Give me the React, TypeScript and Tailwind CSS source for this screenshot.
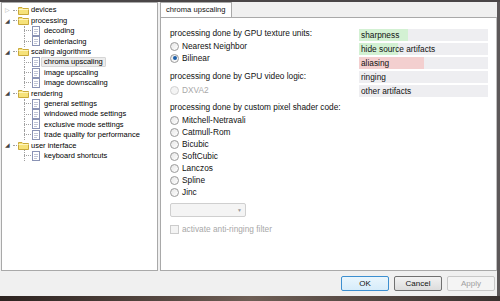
import React from 'react';

type TreeNode = { label: string; kind: 'folder' | 'page'; expander?: 'open' | 'closed'; selected?: boolean };

const TREE: TreeNode[] = [
  { label: 'devices', kind: 'folder', expander: 'closed' },
  { label: 'processing', kind: 'folder', expander: 'open' },
  { label: 'decoding', kind: 'page' },
  { label: 'deinterlacing', kind: 'page' },
  { label: 'scaling algorithms', kind: 'folder', expander: 'open' },
  { label: 'chroma upscaling', kind: 'page', selected: true },
  { label: 'image upscaling', kind: 'page' },
  { label: 'image downscaling', kind: 'page' },
  { label: 'rendering', kind: 'folder', expander: 'open' },
  { label: 'general settings', kind: 'page' },
  { label: 'windowed mode settings', kind: 'page' },
  { label: 'exclusive mode settings', kind: 'page' },
  { label: 'trade quality for performance', kind: 'page' },
  { label: 'user interface', kind: 'folder', expander: 'open' },
  { label: 'keyboard shortcuts', kind: 'page' },
];

const BARS = [
  { label: 'sharpness', fill: 'w-[49px] bg-[#d3f1d3]' },
  { label: 'hide source artifacts', fill: 'w-[39px] bg-[#d3f1d3]' },
  { label: 'aliasing', fill: 'w-[65px] bg-[#f3cfcf]' },
  { label: 'ringing', fill: 'w-0' },
  { label: 'other artifacts', fill: 'w-0' },
];

function Folder() {
  return (
    <svg width="11" height="9" viewBox="0 0 11 9" className="shrink-0">
      <path d="M0.5 1.5 h3.5 l1 1 h5.5 v6 h-10 z" fill="#f6e27a" stroke="#c9a93a" strokeWidth="1" />
      <path d="M0.5 3.5 h10" stroke="#fff6c0" strokeWidth="1" />
    </svg>
  );
}

function Page() {
  return (
    <svg width="8" height="10" viewBox="0 0 8 10" className="shrink-0">
      <rect x="0.5" y="0.5" width="7" height="9" fill="#ffffff" stroke="#8a93b5" />
      <path d="M2 3.5 h4 M2 5.5 h4 M2 7.5 h3" stroke="#b0b6cc" strokeWidth="0.8" />
    </svg>
  );
}

function Radio({ checked, disabled, label }: { checked?: boolean; disabled?: boolean; label: string }) {
  return (
    <div className="flex items-center h-[12px] gap-[3px]">
      <span
        className={
          'w-[9px] h-[9px] rounded-full border flex items-center justify-center ' +
          (disabled ? 'border-[#d0d0d0] bg-[#f4f4f4]' : 'border-[#9a9a9a] bg-gradient-to-br from-[#e6e6e6] to-[#ffffff]')
        }
      >
        {checked && <span className="w-[4px] h-[4px] rounded-full bg-[#1d5fa8]" />}
      </span>
      <span className={disabled ? 'text-[#a8a8a8]' : 'text-[#111]'}>{label}</span>
    </div>
  );
}

function Button({ label, primary, disabled }: { label: string; primary?: boolean; disabled?: boolean }) {
  return (
    <div
      className={
        'w-[48px] h-[15px] rounded-[2px] border flex items-center justify-center ' +
        (primary
          ? 'border-[#3c8fd0] bg-gradient-to-b from-[#eaf6fd] to-[#d6ecfa] text-[#111]'
          : disabled
          ? 'border-[#c8c8c8] bg-[#f4f4f4] text-[#a0a0a0]'
          : 'border-[#707070] bg-gradient-to-b from-[#f2f2f2] to-[#dcdcdc] text-[#111]')
      }
    >
      {label}
    </div>
  );
}

export default function App() {
  return (
    <div
      className="w-[500px] h-[301px] overflow-hidden bg-[#f0f0f0] flex flex-col text-[8px] leading-none"
      style={{ fontFamily: 'Tahoma, "Liberation Sans", Arial, sans-serif' }}
    >
      {/* Title edge */}
      <div className="h-[2px] bg-[#4a4647] shrink-0" />

      <div className="flex flex-1 min-h-0">
        <div className="flex flex-col flex-1 min-w-0">
          <div className="flex h-[269px] pl-[1px] gap-[2px]">
            {/* Settings tree */}
            <div className="w-[157px] bg-white border border-[#a9a9a9] pt-[2px] text-[7.5px] text-black">
              {TREE.map((n) => {
                const isChild = n.kind === 'page';
                return (
                  <div key={n.label} className="relative flex items-center h-[10.4px]">
                    {isChild ? (
                      <>
                        <span className="absolute left-[22px] top-0 bottom-0 border-l border-dotted border-[#a0a0a0]" />
                        <span className="w-[22px]" />
                        <span className="w-[7px] border-t border-dotted border-[#a0a0a0] mr-[1px]" />
                        <Page />
                        <span
                          className={
                            'ml-[1px] px-[2px] h-[10px] flex items-center ' +
                            (n.selected ? 'bg-[#ececec] border border-[#d6d6d6] rounded-[1px]' : 'border border-transparent')
                          }
                        >
                          {n.label}
                        </span>
                      </>
                    ) : (
                      <>
                        <span className="w-[8px] ml-[3px] text-[6px] text-[#444]">
                          {n.expander === 'open' ? '◢' : <span className="text-[#aaa]">▷</span>}
                        </span>
                        <span className="w-[4px] border-t border-dotted border-[#a0a0a0] mr-[1px]" />
                        <Folder />
                        <span className="ml-[2px]">{n.label}</span>
                      </>
                    )}
                  </div>
                );
              })}
            </div>

            {/* Tab page */}
            <div className="flex-1 flex flex-col">
              <div className="flex h-[15px] items-end">
                <div className="h-[15px] px-[5px] bg-white border border-b-0 border-[#a9a9a9] flex items-center text-[#111] text-[7.6px]">
                  chroma upscaling
                </div>
              </div>
              <div className="flex-1 bg-white border border-[#a9a9a9] border-r-[#c0c0c0] flex pl-[9px] pt-[9px] pr-[8px] text-[8.3px]">
                <div className="flex-1 flex flex-col">
                  <div className="h-[12px] flex items-center text-[#111]">processing done by GPU texture units:</div>
                  <div className="mt-[1px]">
                    <Radio label="Nearest Neighbor" />
                    <Radio label="Bilinear" checked />
                  </div>
                  <div className="mt-[6px] h-[12px] flex items-center text-[#111]">processing done by GPU video logic:</div>
                  <div className="mt-[2px]">
                    <Radio label="DXVA2" disabled />
                  </div>
                  <div className="mt-[5px] h-[12px] flex items-center text-[#111]">processing done by custom pixel shader code:</div>
                  <div className="mt-[1px]">
                    {['Mitchell-Netravali', 'Catmull-Rom', 'Bicubic', 'SoftCubic', 'Lanczos', 'Spline', 'Jinc'].map((l) => (
                      <Radio key={l} label={l} />
                    ))}
                  </div>
                  <div className="mt-[5px] w-[76px] h-[14px] border border-[#cfcfcf] rounded-[2px] bg-[#f4f4f4] flex items-center justify-end pr-[3px]">
                    <span className="text-[5px] text-[#9a9a9a]">▼</span>
                  </div>
                  <div className="mt-[6px] flex items-center gap-[3px] h-[12px]">
                    <span className="w-[9px] h-[9px] border border-[#cccccc] bg-[#f4f4f4]" />
                    <span className="text-[#a8a8a8]">activate anti-ringing filter</span>
                  </div>
                </div>

                {/* Quality bars */}
                <div className="w-[129px] flex flex-col gap-[2px] pt-[2px]">
                  {BARS.map((b) => (
                    <div key={b.label} className="relative h-[12px] bg-[#eeeef1]">
                      <div className={'h-full ' + b.fill} />
                      <span className="absolute left-[2px] top-0 h-full flex items-center text-[#111]">{b.label}</span>
                    </div>
                  ))}
                </div>
              </div>
            </div>
          </div>

          {/* Button row */}
          <div className="flex-1 flex items-center justify-end gap-[5px] pr-[2px]">
            <Button label="OK" primary />
            <Button label="Cancel" />
            <Button label="Apply" disabled />
          </div>
        </div>
        <div className="w-[3px] bg-[#5c5859] shrink-0" />
      </div>

      {/* Desktop below */}
      <div className="h-[5px] shrink-0 bg-gradient-to-r from-[#2d2320] via-[#6e5e55] to-[#3a3230]" />
    </div>
  );
}
